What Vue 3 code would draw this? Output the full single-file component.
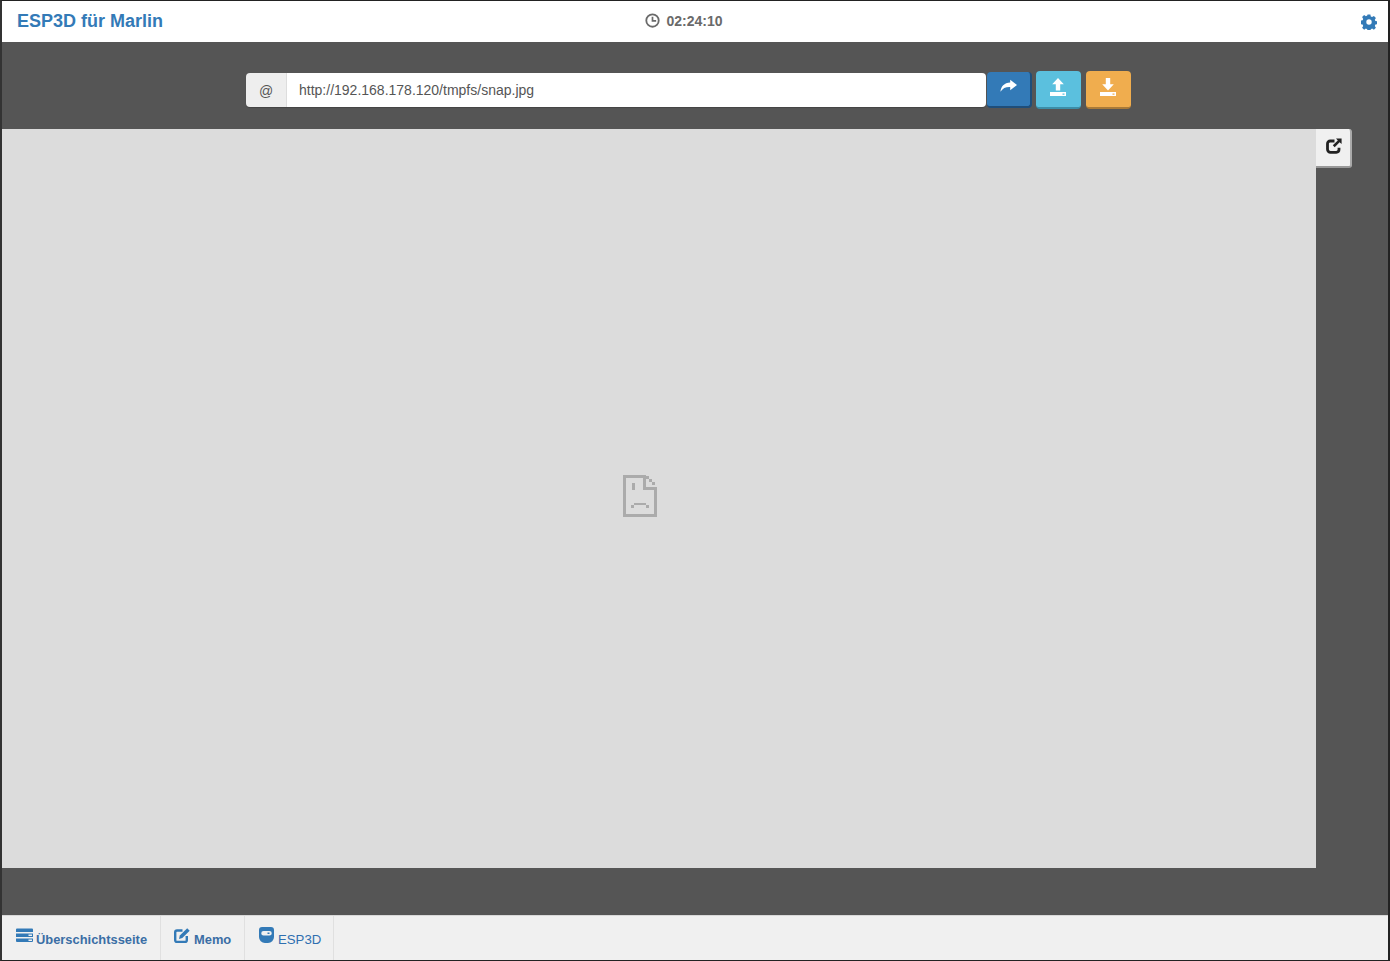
<template>
  <div class="frame">
    <header class="top">
      <div class="brand">ESP3D für Marlin</div>
      <div class="clock">
        <svg class="clock-ico" viewBox="0 0 14 14"><circle cx="7" cy="7" r="5.8" fill="none" stroke="currentColor" stroke-width="1.7"/><path d="M7 3.4V7.4H10.4" fill="none" stroke="currentColor" stroke-width="1.6"/></svg>
        <span>02:24:10</span>
      </div>
      <svg class="gear" viewBox="0 0 16 16"><path fill-rule="evenodd" d="M6.6 0.4h2.8l.4 2 1.3.6 1.8-1.1 2 2-1.1 1.8.6 1.3 2 .4v2.8l-2 .4-.6 1.3 1.1 1.8-2 2-1.8-1.1-1.3.6-.4 2H6.6l-.4-2-1.3-.6-1.8 1.1-2-2 1.1-1.8-.6-1.3-2-.4V6.6l2-.4.6-1.3L1.1 3.1l2-2 1.8 1.1 1.3-.6zM8 5.300a2.700 2.700 0 1 0 0 5.400 2.700 2.700 0 0 0 0-5.400z"/></svg>
    </header>

    <main class="main">
      <div class="toolbar">
        <div class="group">
          <span class="addon">@</span>
          <div class="url">http://192.168.178.120/tmpfs/snap.jpg</div>
        </div>
        <button class="btn go">
          <svg viewBox="0 0 16 14"><path d="M9.6 0.6L16 5.6 9.6 10.6V7.4C5.6 7.2 2.6 8.4 0.4 12 0.8 7 4 3.4 9.6 3.2z" fill="#fff"/></svg>
        </button>
        <button class="btn up">
          <svg viewBox="0 0 16 18"><path fill-rule="evenodd" d="M8 0L13.800 6.200H10.200V12.400H5.800V6.200H2.200zM0 14H16V18H0zM12.500 15.500V16.700H14.500V15.500z" fill="#fff"/></svg>
        </button>
        <button class="btn down">
          <svg viewBox="0 0 16 18"><path fill-rule="evenodd" d="M5.800 0H10.200V6.200H13.800L8 12.400 2.200 6.200H5.800zM0 14H16V18H0zM12.500 15.500V16.700H14.500V15.500z" fill="#fff"/></svg>
        </button>
      </div>

      <div class="stage">
        <div class="image">
          <svg class="broken" viewBox="0 0 34 42" shape-rendering="crispEdges">
            <path d="M1.5 1.5H21.500V13.500H32.500V40.500H1.500z" fill="none" stroke="#ababab" stroke-width="3"/>
            <path d="M23 1h3v3h-3zM26 4h3v3h-3zM29 7h3v3h-3zM9 8h3v7H9zM11 28h12v2H11zM8 30h3v3H8zM23 30h3v3h-3z" fill="#ababab"/>
          </svg>
        </div>
        <button class="pop">
          <svg viewBox="0 0 16 16"><path d="M8.500 3H4.200A2.700 2.700 0 0 0 1.500 5.700v5.600A3 3 0 0 0 4.500 14.300h5.800a2.700 2.700 0 0 0 2.700-2.700V9.800" fill="none" stroke="#222" stroke-width="2.800"/><path d="M10 0.400H15.600V6L13.600 4.200 8.700 9.200 6.800 7.300 11.800 2.400z" fill="#222"/></svg>
        </button>
      </div>
    </main>

    <footer class="tabs">
      <a class="tab first">
        <svg class="tab-ico" viewBox="0 0 17 15"><path fill-rule="evenodd" d="M1 .5h15a1 1 0 0 1 1 1V4H0V1.500a1 1 0 0 1 1-1zM0 5.500h17V9H0zM0 10.500h17V13a1 1 0 0 1-1 1H1a1 1 0 0 1-1-1zM12.500 6.500v1.500H16V6.500zM12.500 11.500v1.500H16v-1.500z"/></svg>
        <span>Überschichtsseite</span>
      </a>
      <a class="tab second">
        <svg class="tab-ico edit" viewBox="0 0 16 15"><path d="M8.500 2.500H3A1.800 1.800 0 0 0 1.200 4.300v8A1.800 1.800 0 0 0 3 14h8a1.800 1.800 0 0 0 1.800-1.800V8" fill="none" stroke="currentColor" stroke-width="2.400"/><path d="M13.200.2l2.500 2.500-7.400 7.400-3.300.8.800-3.300z" fill="currentColor"/></svg>
        <span>Memo</span>
      </a>
      <a class="tab third">
        <svg class="tab-ico esp" viewBox="0 0 15 16"><path fill-rule="evenodd" d="M3 0h9a3 3 0 0 1 3 3v7a6 6 0 0 1-6 6H6a6 6 0 0 1-6-6V3a3 3 0 0 1 3-3zM4.500 4a2.250 2.250 0 0 0 0 4.500h6a2.250 2.250 0 0 0 0-4.500zM8.500 5.500h2v1.500h-2z"/></svg>
        <span class="light">ESP3D</span>
      </a>
    </footer>
  </div>
</template>

<script setup>
</script>

<style>
html, body { margin: 0; background: #555; }
</style>

<style scoped>
.frame {
  width: 1390px;
  height: 961px;
  box-sizing: border-box;
  display: flex;
  flex-direction: column;
  background: #555;
  border-top: 1px solid #222;
  border-bottom: 1px solid #222;
  border-left: 2px solid #333;
  border-right: 2px solid #222;
  font-family: "Liberation Sans", Arial, sans-serif;
}
.top {
  height: 41px;
  flex: none;
  display: flex;
  align-items: center;
  background: #fff;
  box-sizing: border-box;
  position: relative;
}
.brand {
  margin-left: 15px;
  color: #337ab7;
  font-size: 18px;
  font-weight: 700;
  line-height: 20px;
  margin-top: -2px;
}
.clock {
  margin-left: 482px;
  display: flex;
  align-items: center;
  gap: 6.5px;
  color: #6a6a6a;
  font-size: 14px;
  font-weight: 700;
  margin-top: -1px;
}
.clock-ico { width: 15px; height: 15px; margin-top: -2px; }
.gear {
  width: 16px;
  height: 16px;
  fill: #337ab7;
  margin-left: auto;
  margin-right: 11px;
}
.main {
  flex: 1;
  min-height: 0;
  display: flex;
  flex-direction: column;
}
.toolbar {
  height: 87px;
  flex: none;
  box-sizing: border-box;
  padding: 29px 0 0 244px;
  display: flex;
  align-items: flex-start;
}
.group {
  display: flex;
  width: 740px;
  height: 34px;
  margin-top: 2px;
  font-size: 14px;
  color: #555;
  border-radius: 4px;
  overflow: hidden;
  box-shadow: 0 1px 1px rgba(0,0,0,.2);
}
.addon {
  width: 41px;
  flex: none;
  display: flex;
  align-items: center;
  justify-content: center;
  background: #eee;
  box-sizing: border-box;
  border-right: 1px solid #ddd;
  padding-top: 1px;
}
.url {
  flex: 1;
  background: #fff;
  padding-left: 12px;
  line-height: 35px;
}
.btn {
  width: 45px;
  height: 38px;
  padding: 0;
  border: none;
  border-radius: 4px;
  display: flex;
  align-items: center;
  justify-content: center;
  box-sizing: border-box;
}
.btn svg { width: 16px; height: 18px; margin-top: -4px; }
.go {
  margin: 1px 0 0 1px;
  height: 36px;
  background: #337ab7;
  border-bottom: 2px solid #1f4e7a;
  border-right: 2px solid #1f4e7a;
}
.go svg { width: 17px; height: 15px; margin-top: -5px; margin-left: -1px; }
.up { margin-left: 4px; background: #5bc0de; border-bottom: 2px solid #3c8ea8; }
.up svg, .down svg { margin-left: -1px; }
.down { margin-left: 5px; background: #f0ad4e; border-bottom: 2px solid #a97a38; }
.stage {
  display: flex;
  align-items: flex-start;
}
.image {
  width: 1314px;
  height: 739px;
  background: #dcdcdc;
  display: flex;
  align-items: center;
  justify-content: center;
}
.broken {
  width: 34px;
  height: 42px;
  margin-right: 39px;
  margin-top: -5px;
}
.pop {
  width: 36px;
  height: 39px;
  padding: 0;
  border: none;
  background: #f0f0f0;
  border-radius: 0 3px 3px 0;
  border-bottom: 2px solid #999;
  border-right: 2px solid #aaa;
  box-sizing: border-box;
  display: flex;
  align-items: center;
  justify-content: center;
}
.pop svg { width: 16px; height: 16px; margin-top: -4px; margin-left: 1px; }
.tabs {
  height: 45px;
  flex: none;
  display: flex;
  background: #f0f0f0;
  box-sizing: border-box;
  border-top: 1px solid #d8d8d8;
}
.tab {
  display: flex;
  align-items: center;
  box-sizing: border-box;
  padding-left: 13px;
  color: #3a6ea5;
  font-size: 12.9px;
  font-weight: 700;
  border-right: 1px solid #e0e0e0;
  gap: 4px;
}
.tab span { margin-top: 2px; line-height: 43px; }
.first { width: 159px; padding-left: 14px; gap: 3px; }
.second { width: 84px; }
.third { width: 89px; padding-left: 14px; }
.light { font-weight: 400; color: #2f6fb0; font-size: 13.2px; }
.tab-ico { fill: #337ab7; color: #337ab7; width: 17px; height: 15px; margin-top: -5px; flex: none; }
.edit { width: 16px; height: 15px; }
.esp { width: 15px; height: 16px; margin-top: -6px; }
</style>
